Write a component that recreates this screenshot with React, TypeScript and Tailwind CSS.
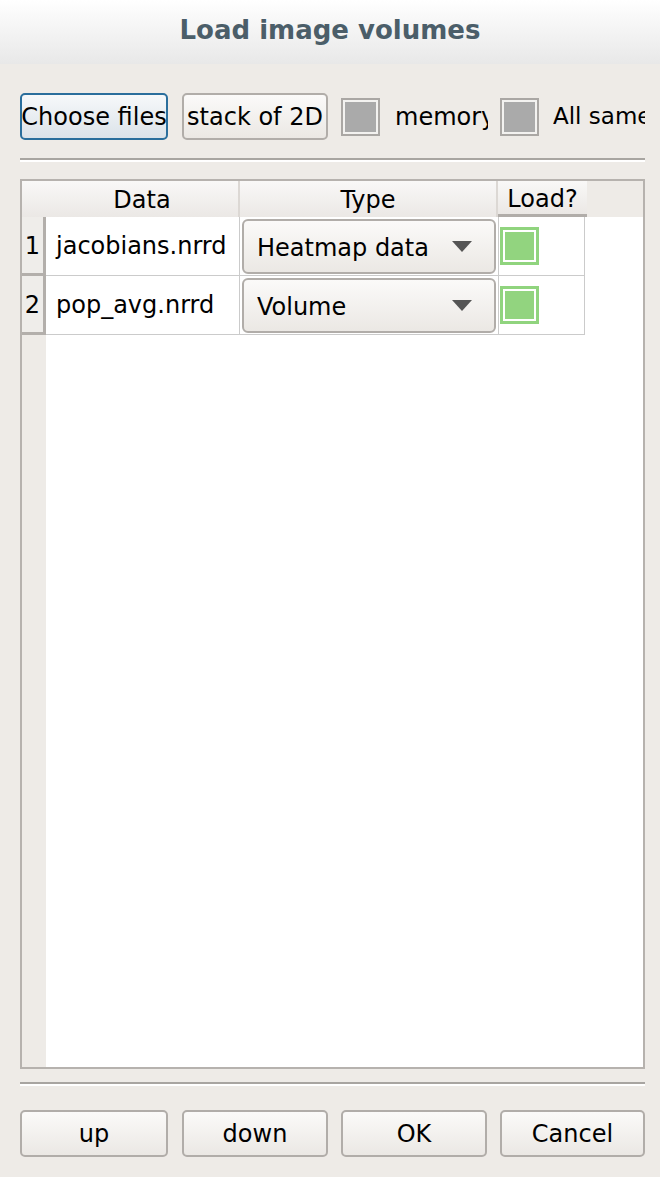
import { ReactNode } from 'react';

const font = { fontFamily: '"DejaVu Sans", "Liberation Sans", sans-serif' };

const Button = ({ children, primary = false, className = '' }: { children: ReactNode; primary?: boolean; className?: string }) => (
  <div
    className={`flex items-center justify-center overflow-hidden whitespace-nowrap rounded-[5px] border-2 text-black ${
      primary
        ? 'border-[#2a6e9c] bg-gradient-to-b from-[#f6f8fa] to-[#dce3e9]'
        : 'border-[#b1ada9] bg-gradient-to-b from-[#fbfaf9] to-[#ebe8e4]'
    } ${className}`}
  >
    {children}
  </div>
);

const GrayCheck = () => (
  <div className="h-[38px] w-[39px] shrink-0 border-2 border-[#aaa7a4] bg-[#f3f2f0] p-[2px]">
    <div className="h-full w-full bg-[#aaaaaa]" />
  </div>
);

const GreenCheck = () => (
  <div className="h-[38px] w-[39px] shrink-0 border-[3px] border-[#90d47e] bg-white p-[2px]">
    <div className="h-full w-full bg-[#92d47f]" />
  </div>
);

const Separator = () => (
  <div className="flex flex-col">
    <div className="h-[2px] bg-[#a8a5a1]" />
    <div className="h-[2px] bg-white" />
  </div>
);

const rows = [
  { n: 1, name: 'jacobians.nrrd', type: 'Heatmap data' },
  { n: 2, name: 'pop_avg.nrrd', type: 'Volume' },
];

export default function App() {
  return (
    <div className="flex h-[1177px] w-[660px] flex-col bg-[#eeebe7] text-[24px] text-black" style={font}>
      {/* Title */}
      <div className="flex h-[64px] items-center justify-center bg-gradient-to-b from-white to-[#e8e8e8] pb-[4px] text-[26px] font-bold text-[#4b5e69]">
        Load image volumes
      </div>

      <div className="flex flex-1 flex-col pl-[20px] pr-[15px]">
        {/* Toolbar */}
        <div className="mt-[29px] flex h-[47px] items-center">
          <Button primary className="h-[47px] w-[148px]">Choose files</Button>
          <Button className="ml-[14px] h-[47px] w-[146px]">stack of 2D</Button>
          <div className="ml-[13px]">
            <GrayCheck />
          </div>
          <span className="ml-[15px] w-[93px] overflow-hidden whitespace-nowrap">memory</span>
          <div className="ml-[12px]">
            <GrayCheck />
          </div>
          <span className="ml-[14px] flex-1 overflow-hidden whitespace-nowrap text-[23px]">All same</span>
        </div>

        <div className="mt-[18px]">
          <Separator />
        </div>

        {/* Table */}
        <div className="mt-[17px] flex h-[890px] flex-col border-2 border-[#b6b2ae] bg-white">
          {/* Header */}
          <div className="flex h-[36px] bg-[#eeebe7]">
            <div className="w-[24px] bg-gradient-to-b from-[#f9f8f7] to-[#ebe8e5]" />
            <div className="flex w-[194px] items-center justify-center border-r-2 border-[#dcd8d4] bg-gradient-to-b from-[#f9f8f7] to-[#ebe8e5] pt-px">
              Data
            </div>
            <div className="flex w-[258px] items-center justify-center border-r-2 border-[#dcd8d4] bg-gradient-to-b from-[#f9f8f7] to-[#ebe8e5] pt-px">
              Type
            </div>
            <div className="flex w-[89px] items-center justify-center border-b-[3px] border-[#b1ada9] bg-gradient-to-b from-[#f9f8f7] to-[#ebe8e5] pt-[2px]">
              Load?
            </div>
          </div>

          {/* Rows */}
          {rows.map((r) => (
            <div key={r.n} className="flex h-[59px]">
              <div className="flex w-[24px] items-center justify-center border-r-[3px] border-b-[3px] border-[#b3afab] bg-[#efedea] pt-[2px]">
                {r.n}
              </div>
              <div className="flex w-[194px] items-center border-b border-r border-[#cbcbcb] pl-[10px]">
                {r.name}
              </div>
              <div className="flex w-[258px] items-center border-b border-[#cbcbcb] px-[2px] pb-px pt-[2px]">
                <div className="flex h-full w-full items-center justify-between rounded-[6px] border-2 border-[#b1ada9] bg-gradient-to-b from-[#fbfaf9] to-[#ebe8e4] pl-[13px] pr-[22px]">
                  <span className="pt-[2px]">{r.type}</span>
                  <svg width="20" height="11" viewBox="0 0 20 11">
                    <polygon points="0,0 20,0 10,11" fill="#555555" />
                  </svg>
                </div>
              </div>
              <div className="flex w-[87px] items-center border-b border-l border-r border-[#cbcbcb] pl-px">
                <GreenCheck />
              </div>
            </div>
          ))}

          {/* Filler */}
          <div className="flex flex-1">
            <div className="w-[24px] bg-[#eeebe7]" />
            <div className="flex-1 bg-white" />
          </div>
        </div>

        <div className="mt-[13px]">
          <Separator />
        </div>

        {/* Bottom buttons */}
        <div className="mt-[24px] flex h-[47px]">
          <Button className="h-[47px] w-[148px]">up</Button>
          <Button className="ml-[14px] h-[47px] w-[146px]">down</Button>
          <Button className="ml-[13px] h-[47px] w-[146px]">OK</Button>
          <Button className="ml-[13px] h-[47px] flex-1">Cancel</Button>
        </div>
      </div>
    </div>
  );
}
